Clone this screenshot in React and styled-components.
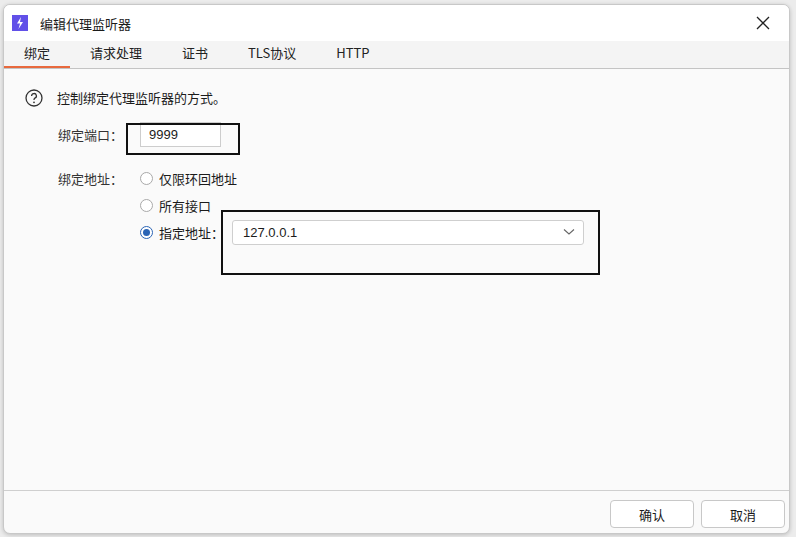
import React from 'react';
import styled, { createGlobalStyle } from 'styled-components';

const Global = createGlobalStyle`
  html, body { margin: 0; padding: 0; background: #e9e9e9; }
  body { font-family: "Noto Sans CJK SC", "Noto Sans", sans-serif; font-size: 13px; color: #1b1b1b; }
`;

const Page = styled.div`
  width: 796px; height: 537px; position: relative; overflow: hidden;
  background: #ececec; padding: 4px 6px 5px 3px; box-sizing: border-box;
`;

const Dialog = styled.div`
  height: 100%; display: flex; flex-direction: column;
  background: #fafafa; border: 1px solid #c8c8c8; border-radius: 7px; overflow: hidden;
  box-shadow: 0 1px 4px rgba(0,0,0,0.2);
`;

const TitleBar = styled.div`
  height: 36px; display: flex; align-items: center; background: #fff;
  padding: 0 10px 0 8px; gap: 12px; flex-shrink: 0;
`;

const AppIcon = styled.div`
  width: 16px; height: 16px; background: #6150e8; display: flex; align-items: center; justify-content: center;
`;

const Title = styled.div` flex: 1; font-size: 13px; `;

const Close = styled.div` width: 20px; height: 20px; display: flex; align-items: center; justify-content: center; margin-right: 6px; `;

const Tabs = styled.div`
  height: 27px; display: flex; background: #f4f4f4; border-bottom: 1px solid #c4c4c4; flex-shrink: 0;
`;

const Tab = styled.div`
  padding: 0 20px 2px; display: flex; align-items: center; font-size: 13px;
  box-sizing: border-box; border-bottom: 2px solid ${p => p.$active ? '#e8693d' : 'transparent'};
  color: #222; font-family: "Noto Sans CJK SC", sans-serif; line-height: 1;
`;

const Body = styled.div` flex: 1; padding: 19px 20px; position: relative; `;

const Hint = styled.div` display: flex; align-items: center; gap: 14px; margin-left: 1px; `;

const Row = styled.div` display: flex; align-items: center; margin-left: 34px; margin-top: ${p => p.$top}px; `;

const TopRow = styled(Row)` align-items: flex-start; `;

const Label = styled.div` width: 82px; color: #333; `;

const Input = styled.div`
  width: 81px; height: 25px; border: 1px solid #cdcdcd; background: #fff; box-sizing: border-box;
  display: flex; align-items: center; padding-left: 8px; font-family: "Liberation Sans", sans-serif; font-size: 13px;
`;

const Radios = styled.div` display: flex; flex-direction: column; gap: 9px; `;

const RadioRow = styled.div` display: flex; align-items: center; gap: 6px; height: 18px; `;

const Radio = styled.span`
  width: 13px; height: 13px; border-radius: 50%; box-sizing: border-box;
  border: 1px solid ${p => p.$on ? '#2a64b5' : '#a9a9a9'}; background: #fff;
  display: flex; align-items: center; justify-content: center;
  &::after { content: ''; width: 7px; height: 7px; border-radius: 50%; background: ${p => p.$on ? '#2a64b5' : 'transparent'}; }
`;

const Select = styled.div`
  width: 352px; height: 25px; border: 1px solid #cfcfcf; border-radius: 3px; background: #fff; box-sizing: border-box;
  display: flex; align-items: center; justify-content: space-between; padding: 0 8px 0 10px; margin-left: 2px;
  font-family: "Liberation Sans", sans-serif; font-size: 13px;
`;

const Mark = styled.div`
  position: absolute; border: 2px solid #111;
  left: ${p => p.$x}px; top: ${p => p.$y}px; width: ${p => p.$w}px; height: ${p => p.$h}px;
`;

const Footer = styled.div`
  height: 43px; border-top: 1px solid #cfcfcf; display: flex; justify-content: flex-end; align-items: center;
  gap: 7px; padding: 4px 4px 0 0; flex-shrink: 0; box-sizing: border-box;
`;

const Button = styled.div`
  width: 84px; height: 28px; border: 1px solid #c8c8c8; border-radius: 4px; background: #fff; box-sizing: border-box;
  display: flex; align-items: center; justify-content: center; font-size: 13px;
`;

export default function App() {
  return (
    <Page>
      <Global />
      <Dialog>
        <TitleBar>
          <AppIcon>
            <svg width="10" height="12" viewBox="0 0 10 12"><path d="M6 0 L2 6.5 H5 L3.5 12 L8 5 H5 Z" fill="#fff" /></svg>
          </AppIcon>
          <Title>编辑代理监听器</Title>
          <Close>
            <svg width="14" height="14" viewBox="0 0 14 14"><path d="M1 1 L13 13 M13 1 L1 13" stroke="#222" strokeWidth="1.3" /></svg>
          </Close>
        </TitleBar>
        <Tabs>
          <Tab $active>绑定</Tab>
          <Tab>请求处理</Tab>
          <Tab>证书</Tab>
          <Tab>TLS协议</Tab>
          <Tab>HTTP</Tab>
        </Tabs>
        <Body>
          <Hint>
            <svg width="18" height="18" viewBox="0 0 18 18">
              <circle cx="9" cy="9" r="8" fill="none" stroke="#333" strokeWidth="1.3" />
              <path d="M6.6 7 A2.4 2.4 0 1 1 9.8 9.2 C9 9.6 9 10 9 11" fill="none" stroke="#333" strokeWidth="1.3" />
              <circle cx="9" cy="13.3" r="0.9" fill="#333" />
            </svg>
            <span>控制绑定代理监听器的方式。</span>
          </Hint>
          <Row $top={15}>
            <Label>绑定端口：</Label>
            <Input>9999</Input>
          </Row>
          <TopRow $top={22}>
            <Label>绑定地址：</Label>
            <Radios>
              <RadioRow><Radio />仅限环回地址</RadioRow>
              <RadioRow><Radio />所有接口</RadioRow>
              <RadioRow>
                <Radio $on />指定地址：
                <Select>
                  <span>127.0.0.1</span>
                  <svg width="12" height="8" viewBox="0 0 12 8"><path d="M1 1.5 L6 6 L11 1.5" fill="none" stroke="#666" strokeWidth="1.1" /></svg>
                </Select>
              </RadioRow>
            </Radios>
          </TopRow>
          <Mark $x={122} $y={54} $w={110} $h={28} />
          <Mark $x={217} $y={141} $w={375} $h={61} />
        </Body>
        <Footer>
          <Button>确认</Button>
          <Button>取消</Button>
        </Footer>
      </Dialog>
    </Page>
  );
}
